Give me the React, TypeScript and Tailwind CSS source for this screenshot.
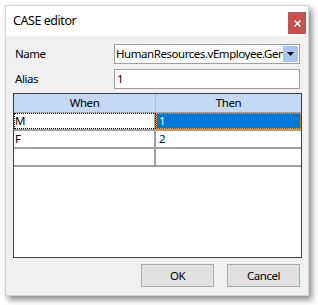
export default function App() {
  const rows = [
    { when: "M", then: "1" },
    { when: "F", then: "2" },
    { when: "", then: "" },
  ];

  return (
    <div className="w-[318px] h-[305px] bg-white pt-[5px] pl-[5px] font-['Noto_Sans',sans-serif] text-[11.5px] tracking-[-0.45px] text-black">
      <div className="w-[304px] h-[291px] flex flex-col bg-[#f0f0f0] shadow-[3px_4px_6px_rgba(0,0,0,0.45)] border border-[#d4d4d4]">
        {/* title bar */}
        <div className="h-[30px] bg-white flex items-start shrink-0">
          <span className="self-center pl-[7px] text-[12.5px] leading-none">CASE editor</span>
          <div className="ml-auto mt-[6px] mr-[2px] w-[18px] h-[22px] bg-[#c75050] flex items-center justify-center">
            <svg width="7" height="7" viewBox="0 0 7 7">
              <path d="M0.5 0.5L6.5 6.5M6.5 0.5L0.5 6.5" stroke="white" strokeWidth="1.5" />
            </svg>
          </div>
        </div>

        <div className="flex-1 flex flex-col pl-[7px] pr-[6px] pt-[8px]">
          {/* Name */}
          <div className="flex items-center h-[20px]">
            <span className="w-[101px] pl-[2px]">Name</span>
            <div className="w-[186px] h-[20px] bg-white border border-[#a0a0a0] flex items-center overflow-hidden">
              <span className="flex-1 whitespace-nowrap overflow-hidden pl-[1px] leading-none">HumanResources.vEmployee.Gender</span>
              <div className="w-[15px] h-[16px] mr-[1px] bg-[#a9c6f5] flex items-center justify-center shrink-0">
                <svg width="7" height="4" viewBox="0 0 7 4">
                  <path d="M0 0H7L3.5 4Z" fill="black" />
                </svg>
              </div>
            </div>
          </div>

          {/* Alias */}
          <div className="flex items-center h-[20px] mt-[5px]">
            <span className="w-[101px] pl-[2px]">Alias</span>
            <div className="w-[186px] h-[20px] bg-white border border-[#a0a0a0] flex items-center pl-[2px] leading-none">1</div>
          </div>

          {/* grid */}
          <div className="mt-[4px] h-[165px] bg-white border border-[#1f3f9a] flex flex-col">
            <div className="flex h-[19px] bg-[#c4d9f5] border-b border-[#a0a0a0] shrink-0">
              <div className="w-[142px] flex items-center justify-center border-r border-[#a8c2e8]">When</div>
              <div className="flex-1 flex items-center justify-center">Then</div>
            </div>
            {rows.map((r, i) => (
              <div key={i} className="flex h-[18px] border-b-2 border-[#a0a0a0] shrink-0">
                <div
                  className={`w-[142px] flex items-center pl-[1px] border-r-2 border-[#a0a0a0] ${
                    i === 0 ? "outline outline-1 outline-dotted outline-black -outline-offset-1" : ""
                  }`}
                >
                  {r.when}
                </div>
                <div
                  className={`flex-1 flex items-center pl-[3px] ${
                    i === 0 ? "bg-[#0078d7] text-white outline outline-1 outline-dotted outline-[#f0a040] -outline-offset-1" : ""
                  }`}
                >
                  {r.then}
                </div>
              </div>
            ))}
          </div>

          {/* buttons */}
          <div className="flex justify-end gap-[13px] mt-[6px] pr-[2px]">
            <button className="w-[73px] h-[23px] bg-[#e1e1e1] border border-[#adadad]">OK</button>
            <button className="w-[73px] h-[23px] bg-[#e1e1e1] border border-[#adadad]">Cancel</button>
          </div>
        </div>
      </div>
    </div>
  );
}
